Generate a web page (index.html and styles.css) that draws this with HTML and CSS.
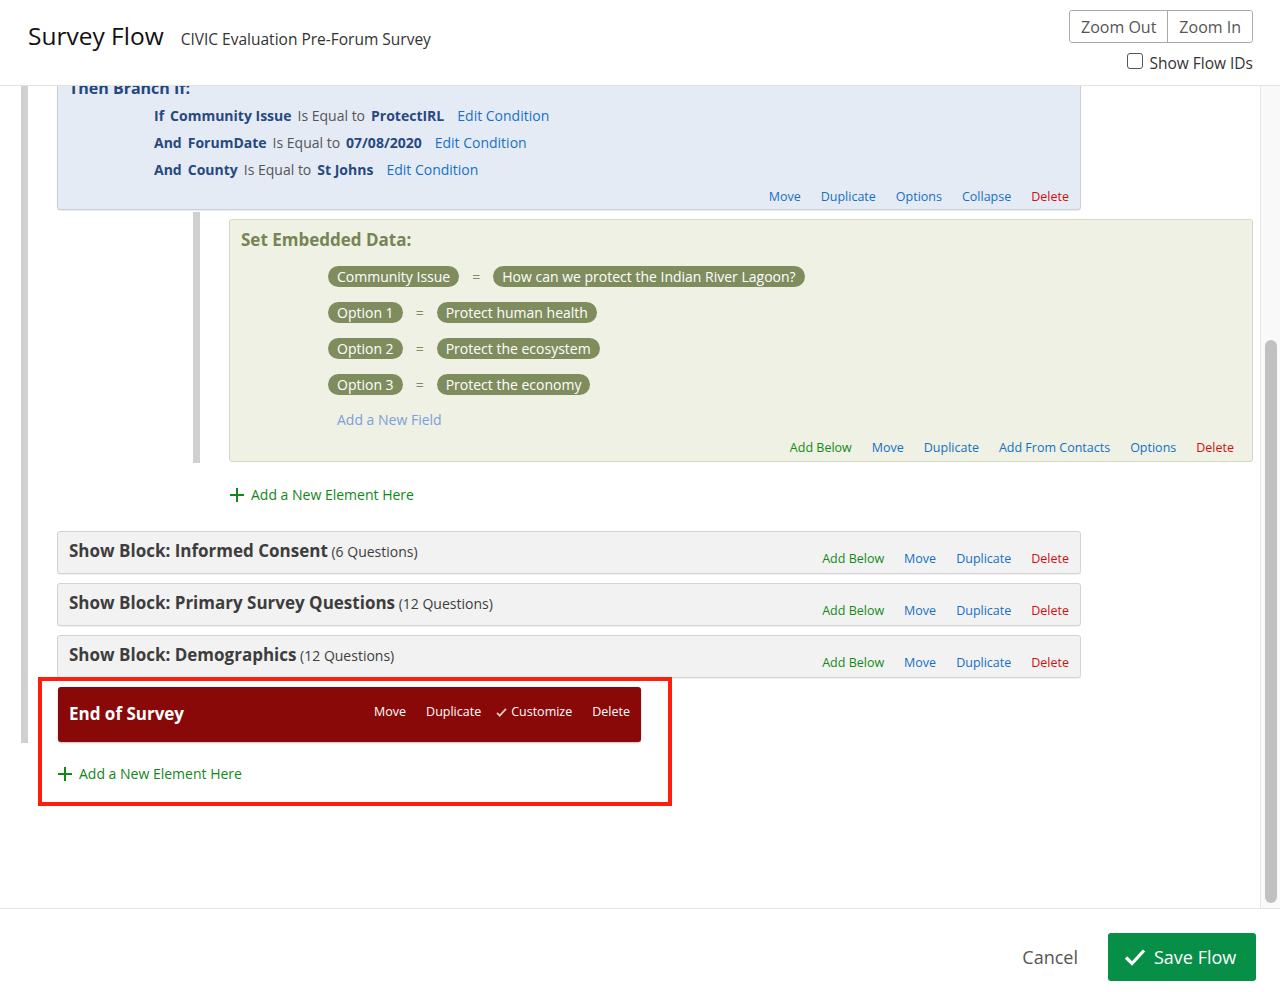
FILE: index.html
```html
<!DOCTYPE html>
<html lang="en">
<head>
<meta charset="utf-8">
<title>Survey Flow</title>
<link rel="stylesheet" href="styles.css">
</head>
<body>
<div class="app">
  <header class="topbar">
    <div class="title-group">
      <h1 class="title">Survey Flow</h1>
      <span class="subtitle">CIVIC Evaluation Pre-Forum Survey</span>
    </div>
    <div class="tools">
      <div class="zoom-group">
        <button class="zbtn zbtn-out">Zoom Out</button>
        <button class="zbtn">Zoom In</button>
      </div>
      <label class="flowids"><span class="cbox"></span>Show Flow IDs</label>
    </div>
  </header>

  <div class="body">
    <div class="canvas">
      <div class="scroller">
        <div class="flow">
          <div class="branch">
            <div class="branch-title">Then Branch If:</div>
            <div class="conditions">
              <div class="cond"><b class="kw">If</b><b class="field">Community Issue</b><span class="op">Is Equal to</span><b class="val">ProtectIRL</b><a class="edit">Edit Condition</a></div>
              <div class="cond"><b class="kw">And</b><b class="field">ForumDate</b><span class="op">Is Equal to</span><b class="val">07/08/2020</b><a class="edit">Edit Condition</a></div>
              <div class="cond"><b class="kw">And</b><b class="field">County</b><span class="op">Is Equal to</span><b class="val">St Johns</b><a class="edit">Edit Condition</a></div>
            </div>
            <div class="actions">
              <a class="act blue">Move</a><a class="act blue">Duplicate</a><a class="act blue">Options</a><a class="act blue">Collapse</a><a class="act red">Delete</a>
            </div>
          </div>

          <div class="branch-children">
            <div class="ed">
              <div class="ed-title">Set Embedded Data:</div>
              <div class="ed-rows">
                <div class="ed-row"><span class="pill">Community Issue</span><span class="eq">=</span><span class="pill">How can we protect the Indian River Lagoon?</span></div>
                <div class="ed-row"><span class="pill">Option 1</span><span class="eq">=</span><span class="pill">Protect human health</span></div>
                <div class="ed-row"><span class="pill">Option 2</span><span class="eq">=</span><span class="pill">Protect the ecosystem</span></div>
                <div class="ed-row"><span class="pill">Option 3</span><span class="eq">=</span><span class="pill">Protect the economy</span></div>
              </div>
              <div class="add-field">Add a New Field</div>
              <div class="actions ed-actions">
                <a class="act green">Add Below</a><a class="act blue">Move</a><a class="act blue">Duplicate</a><a class="act blue">Add From Contacts</a><a class="act blue">Options</a><a class="act red">Delete</a>
              </div>
            </div>
          </div>

          <div class="add-new branch-add">
            <svg class="plus" viewBox="0 0 14 14" width="14" height="14"><path d="M7 0v14M0 7h14" stroke="#13861a" stroke-width="2" fill="none"/></svg>
            <span>Add a New Element Here</span>
          </div>

          <div class="block">
            <div class="block-title"><b>Show Block: Informed Consent</b> <span class="qcount">(6 Questions)</span></div>
            <div class="actions block-actions"><a class="act green">Add Below</a><a class="act blue">Move</a><a class="act blue">Duplicate</a><a class="act red">Delete</a></div>
          </div>
          <div class="block">
            <div class="block-title"><b>Show Block: Primary Survey Questions</b> <span class="qcount">(12 Questions)</span></div>
            <div class="actions block-actions"><a class="act green">Add Below</a><a class="act blue">Move</a><a class="act blue">Duplicate</a><a class="act red">Delete</a></div>
          </div>
          <div class="block">
            <div class="block-title"><b>Show Block: Demographics</b> <span class="qcount">(12 Questions)</span></div>
            <div class="actions block-actions"><a class="act green">Add Below</a><a class="act blue">Move</a><a class="act blue">Duplicate</a><a class="act red">Delete</a></div>
          </div>

          <div class="end">
            <div class="end-title">End of Survey</div>
            <div class="end-actions">
              <a class="end-act">Move</a><a class="end-act">Duplicate</a>
              <a class="end-act custom"><svg class="chk" viewBox="0 0 12 10" width="11" height="9"><path d="M1 5.5l3 3 7-7.5" stroke="#d9c9c9" stroke-width="2" fill="none"/></svg>Customize</a>
              <a class="end-act">Delete</a>
            </div>
          </div>
        </div>

        <div class="add-new root-add">
          <svg class="plus" viewBox="0 0 14 14" width="14" height="14"><path d="M7 0v14M0 7h14" stroke="#13861a" stroke-width="2" fill="none"/></svg>
          <span>Add a New Element Here</span>
        </div>
      </div>
      <div class="highlight"></div>
    </div>
    <div class="scrolltrack"><div class="thumb"></div></div>
  </div>

  <footer class="footer">
    <a class="cancel">Cancel</a>
    <button class="save">
      <svg viewBox="0 0 22 18" width="22" height="18"><path d="M2 9.5l6 6L20 2.5" stroke="#fff" stroke-width="3.2" fill="none"/></svg>
      <span>Save Flow</span>
    </button>
  </footer>
</div>
</body>
</html>
```

FILE: styles.css
```css
* { box-sizing: border-box; }
html, body { margin: 0; padding: 0; }
body {
  font-family: "Open Sans", "Liberation Sans", sans-serif;
  color: #333;
  background: #fff;
}
a { cursor: pointer; }

.app {
  width: 1280px;
  height: 992px;
  display: flex;
  flex-direction: column;
  overflow: hidden;
}

/* Header */
.topbar {
  height: 86px;
  flex: 0 0 86px;
  border-bottom: 1px solid #e3e3e3;
  display: flex;
  justify-content: space-between;
  align-items: flex-start;
  padding: 0 27px 0 28px;
}
.title-group {
  display: flex;
  align-items: baseline;
  padding-top: 19px;
}
.title {
  margin: 0;
  font-size: 24.5px;
  font-weight: 400;
  color: #111;
  line-height: 34px;
}
.subtitle {
  margin-left: 17px;
  font-size: 15.5px;
  color: #333;
}
.tools {
  display: flex;
  flex-direction: column;
  align-items: flex-end;
  padding-top: 10px;
}
.zoom-group {
  display: flex;
  border: 1px solid #a9a9a9;
  border-radius: 3px;
  height: 33px;
}
.zbtn {
  font-family: "Open Sans", "Liberation Sans", sans-serif;
  font-size: 16px;
  color: #555;
  background: #fff;
  border: 0;
  padding: 0 11px;
  height: 31px;
  border-radius: 3px;
}
.zbtn-out { border-right: 1px solid #a9a9a9; border-radius: 3px 0 0 3px; }
.flowids {
  display: flex;
  align-items: center;
  margin-top: 9px;
  font-size: 15.5px;
  color: #333;
  line-height: 22px;
}
.cbox {
  width: 16px;
  height: 16px;
  border: 1px solid #555;
  border-radius: 3px;
  margin-right: 6px;
  margin-top: -4px;
  background: #fff;
}

/* Body */
.body {
  flex: 1;
  display: flex;
  min-height: 0;
}
.canvas {
  flex: 1;
  position: relative;
  overflow: hidden;
}
.scroller {
  margin-top: -18px;
}
.flow {
  margin-left: 21px;
  border-left: 7px solid #d0d0d0;
  padding-left: 29px;
  padding-bottom: 1px;
}

/* Branch */
.branch {
  width: 1024px;
  background: #e5ebf5;
  border: 1px solid #c6cedb;
  border-radius: 3px;
  box-shadow: 0 1px 1px rgba(0,0,0,0.08);
  padding: 9px 11px 3px 11px;
}
.branch-title {
  font-size: 16px;
  font-weight: 700;
  color: #24477f;
  line-height: 20px;
}
.conditions {
  margin-left: 85px;
  margin-top: 4px;
}
.cond {
  font-size: 14px;
  line-height: 27px;
  height: 27px;
  display: flex;
  align-items: baseline;
}
.cond .kw { color: #27497f; margin-right: 6px; }
.cond .field { color: #27497f; margin-right: 6px; }
.cond .op { color: #555; margin-right: 6px; }
.cond .val { color: #27497f; margin-right: 13px; }
.cond .edit { color: #1672c6; }

.actions {
  display: flex;
  justify-content: flex-end;
  font-size: 12.5px;
  line-height: 18px;
  margin-top: 5px;
}
.act { margin-left: 20px; }
.act.blue { color: #1470c3; }
.act.red { color: #d10f0f; }
.act.green { color: #128a17; }

/* Branch children */
.branch-children {
  margin-top: 2px;
  margin-left: 136px;
  border-left: 7px solid #d0d0d0;
  padding-left: 29px;
  padding-top: 7px;
  padding-bottom: 1px;
}
.ed {
  width: 1024px;
  background: #eef1e3;
  border: 1px solid #d2dabd;
  border-radius: 3px;
  padding: 9px 18px 4px 11px;
}
.ed-title {
  font-size: 17px;
  font-weight: 700;
  color: #768553;
  line-height: 22px;
}
.ed-rows {
  margin-top: 7px;
  margin-left: 87px;
}
.ed-row {
  height: 36px;
  display: flex;
  align-items: center;
}
.pill {
  background: #7f8d5e;
  color: #fff;
  font-size: 14px;
  line-height: 21px;
  height: 21px;
  padding: 0 9px;
  border-radius: 11px;
}
.eq {
  color: #7f8d5e;
  font-size: 14px;
  margin: 0 13px;
}
.add-field {
  margin-top: 8px;
  margin-left: 96px;
  font-size: 14px;
  line-height: 20px;
  color: #7ba0dc;
}
.ed-actions { margin-top: 9px; }

/* Add new element */
.add-new {
  display: flex;
  align-items: center;
  font-size: 14px;
  line-height: 20px;
  color: #13861a;
}
.add-new .plus { margin-right: 7px; }
.branch-add {
  margin-left: 173px;
  margin-top: 22px;
  margin-bottom: 26px;
}
.root-add {
  margin-left: 58px;
  margin-top: 21px;
}

/* Show block */
.block {
  width: 1024px;
  height: 43px;
  background: #f2f2f2;
  border: 1px solid #d3d3d3;
  border-radius: 3px;
  box-shadow: 0 1px 1px rgba(0,0,0,0.06);
  display: flex;
  justify-content: space-between;
  padding: 8px 11px 5px 11px;
  margin-bottom: 9px;
}
.block-title {
  align-self: flex-start;
  font-size: 14px;
  color: #3d3d3d;
  line-height: 22px;
}
.block-title b { font-size: 17px; font-weight: 700; color: #3d3d3d; }
.block-actions { align-self: flex-end; margin-top: 0; }

/* End of survey */
.end {
  margin-left: 1px;
  width: 583px;
  height: 55px;
  background: #890808;
  border-radius: 3px;
  box-shadow: 0 1px 2px rgba(0,0,0,0.25);
  display: flex;
  align-items: center;
  justify-content: space-between;
  padding: 0 11px;
  color: #fff;
}
.end-title {
  font-size: 17px;
  font-weight: 700;
  line-height: 24px;
  margin-top: -2px;
}
.end-actions {
  display: flex;
  align-items: center;
  font-size: 12.5px;
  margin-top: -6px;
}
.end-act { margin-left: 20px; color: #fff; display: flex; align-items: center; }
.end-act.custom { margin-left: 15px; }
.end-act.custom .chk { margin-right: 4px; margin-top: 2px; }

.highlight {
  position: absolute;
  left: 38px;
  top: 591px;
  width: 634px;
  height: 129px;
  border: 4px solid #ff1e0c;
  pointer-events: none;
}

/* Scrollbar */
.scrolltrack {
  width: 20px;
  flex: 0 0 20px;
  background: #f9f9f9;
  border-left: 1px solid #e6e6e6;
  padding-top: 254px;
  padding-left: 4px;
}
.thumb {
  width: 12px;
  height: 563px;
  background: #c1c1c1;
  border-radius: 6px;
}

/* Footer */
.footer {
  flex: 0 0 84px;
  height: 84px;
  border-top: 1px solid #e3e3e3;
  display: flex;
  justify-content: flex-end;
  align-items: flex-start;
  padding: 24px 24px 0 0;
}
.cancel {
  font-size: 18px;
  color: #555;
  line-height: 48px;
  margin-right: 30px;
}
.save {
  height: 48px;
  width: 148px;
  background: #078f48;
  border: 0;
  border-radius: 3px;
  color: #fff;
  font-family: "Open Sans", "Liberation Sans", sans-serif;
  font-size: 18px;
  display: flex;
  align-items: center;
  padding: 0 0 0 16px;
}
.save svg { margin-right: 8px; }
```
